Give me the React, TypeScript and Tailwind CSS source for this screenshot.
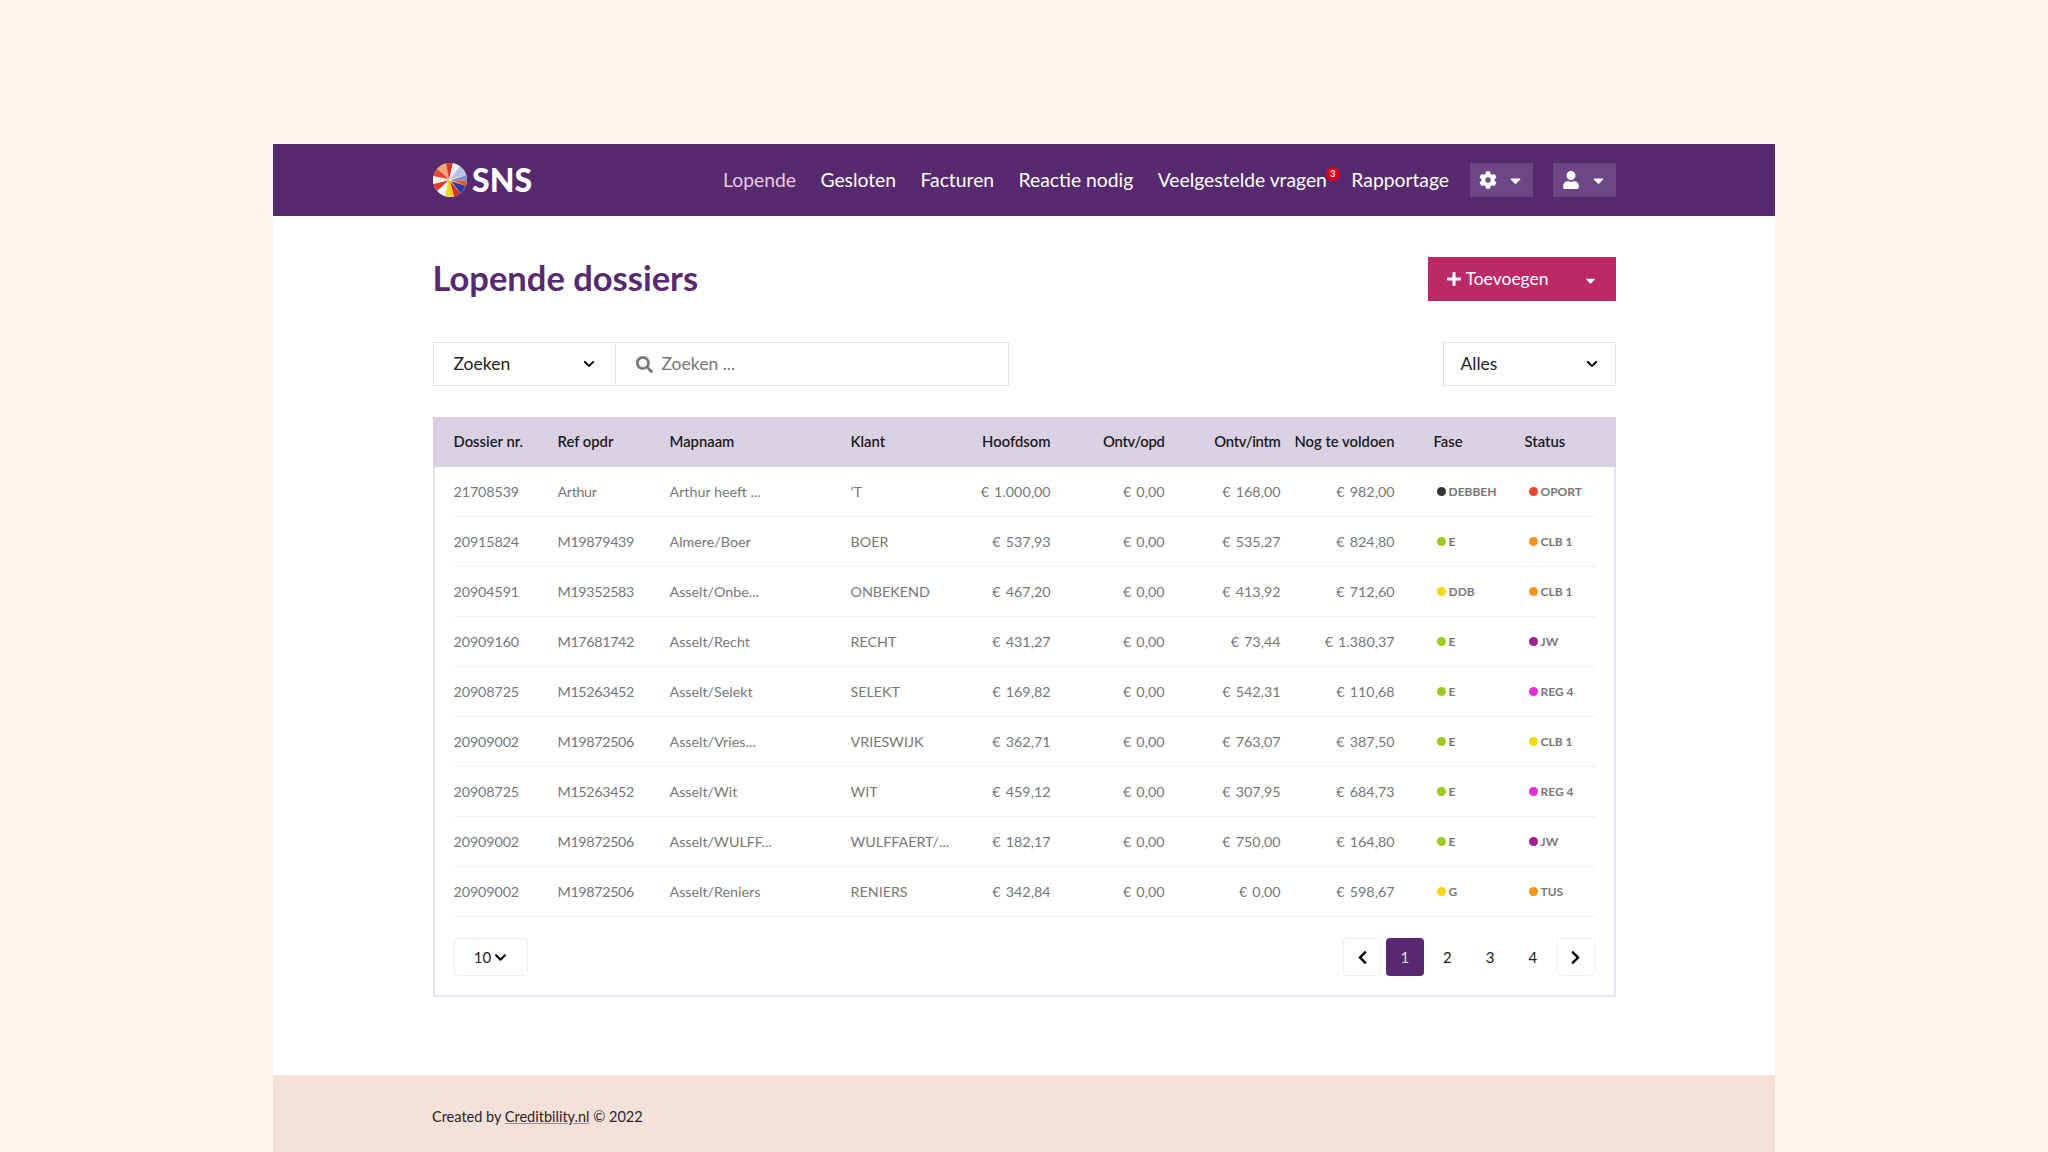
import React from 'react';
import { FaCaretDown, FaChevronDown, FaChevronLeft, FaChevronRight, FaCog, FaPlus, FaSearch, FaUser } from 'react-icons/fa';

type Row = {
    nr: string;
    ref: string;
    map: string;
    klant: string;
    hoofd: string;
    opd: string;
    intm: string;
    nog: string;
    fase: string;
    faseDot: string;
    status: string;
    statusDot: string;
};

const DARK = 'bg-[#333333]';
const GREEN = 'bg-[#9ccc1c]';
const YELLOW = 'bg-[#f6d80e]';
const ORANGE = 'bg-[#f7931a]';
const RED = 'bg-[#e8452f]';
const PURPLE = 'bg-[#a01f95]';
const PINK = 'bg-[#e62fd8]';

const rows: Row[] = [
    { nr: '21708539', ref: 'Arthur', map: 'Arthur heeft ...', klant: '‘T', hoofd: '€ 1.000,00', opd: '€ 0,00', intm: '€ 168,00', nog: '€ 982,00', fase: 'DEBBEH', faseDot: DARK, status: 'OPORT', statusDot: RED },
    { nr: '20915824', ref: 'M19879439', map: 'Almere/Boer', klant: 'BOER', hoofd: '€ 537,93', opd: '€ 0,00', intm: '€ 535,27', nog: '€ 824,80', fase: 'E', faseDot: GREEN, status: 'CLB 1', statusDot: ORANGE },
    { nr: '20904591', ref: 'M19352583', map: 'Asselt/Onbe...', klant: 'ONBEKEND', hoofd: '€ 467,20', opd: '€ 0,00', intm: '€ 413,92', nog: '€ 712,60', fase: 'DDB', faseDot: YELLOW, status: 'CLB 1', statusDot: ORANGE },
    { nr: '20909160', ref: 'M17681742', map: 'Asselt/Recht', klant: 'RECHT', hoofd: '€ 431,27', opd: '€ 0,00', intm: '€ 73,44', nog: '€ 1.380,37', fase: 'E', faseDot: GREEN, status: 'JW', statusDot: PURPLE },
    { nr: '20908725', ref: 'M15263452', map: 'Asselt/Selekt', klant: 'SELEKT', hoofd: '€ 169,82', opd: '€ 0,00', intm: '€ 542,31', nog: '€ 110,68', fase: 'E', faseDot: GREEN, status: 'REG 4', statusDot: PINK },
    { nr: '20909002', ref: 'M19872506', map: 'Asselt/Vries...', klant: 'VRIESWIJK', hoofd: '€ 362,71', opd: '€ 0,00', intm: '€ 763,07', nog: '€ 387,50', fase: 'E', faseDot: GREEN, status: 'CLB 1', statusDot: YELLOW },
    { nr: '20908725', ref: 'M15263452', map: 'Asselt/Wit', klant: 'WIT', hoofd: '€ 459,12', opd: '€ 0,00', intm: '€ 307,95', nog: '€ 684,73', fase: 'E', faseDot: GREEN, status: 'REG 4', statusDot: PINK },
    { nr: '20909002', ref: 'M19872506', map: 'Asselt/WULFF...', klant: 'WULFFAERT/...', hoofd: '€ 182,17', opd: '€ 0,00', intm: '€ 750,00', nog: '€ 164,80', fase: 'E', faseDot: GREEN, status: 'JW', statusDot: PURPLE },
    { nr: '20909002', ref: 'M19872506', map: 'Asselt/Reniers', klant: 'RENIERS', hoofd: '€ 342,84', opd: '€ 0,00', intm: '€ 0,00', nog: '€ 598,67', fase: 'G', faseDot: YELLOW, status: 'TUS', statusDot: ORANGE },
];

const GRID = 'grid grid-cols-[105px_111px_181px_120px_80px_114px_116px_114px_130px_71px] items-center';
const MONEY = 'text-right [word-spacing:1.5px]';

const Logo = () => (
    <svg width="34" height="34" viewBox="0 0 34 34" className="shrink-0 ml-[1px]">
        <defs>
            <clipPath id="logoClip">
                <circle cx="17" cy="17" r="17" />
            </clipPath>
        </defs>
        <g clipPath="url(#logoClip)">
            <rect width="34" height="34" fill="#f6f1ee" />
            <polygon points="16,16 3,5 13,0" fill="#f3a678" />
            <polygon points="16,16 13,0 20,0" fill="#d8342b" />
            <polygon points="17,15 20,0 27,3" fill="#f3eef2" />
            <polygon points="17,16 27,3 34,12" fill="#b9c3e6" />
            <polygon points="18,17 34,12 34,18" fill="#7f8fcb" />
            <polygon points="18,17 34,18 33,23" fill="#e8552a" />
            <polygon points="18,18 33,23 28,31" fill="#2d3f96" />
            <polygon points="17,18 28,31 21,34" fill="#d92b2b" />
            <polygon points="16,15 21,34 12,33" fill="#f7d21e" />
            <polygon points="15,18 12,33 4,28" fill="#f8f4ee" />
            <polygon points="16,17 4,28 0,21" fill="#de3a2e" />
            <polygon points="16,17 0,21 0,13" fill="#f7efe8" />
            <polygon points="16,16 0,13 3,5" fill="#e8432f" />
        </g>
    </svg>
);

const Dot = ({ color, label }: { color: string; label: string }) => (
    <div className="flex items-center gap-[3px] text-[12px] font-bold text-[#777777]">
        <span className={`w-[9px] h-[9px] rounded-full ${color}`}></span>
        <span>{label}</span>
    </div>
);

const App: React.FC = () => {
    return (
        <div className="min-h-screen bg-[#fff3ee] pt-[144px] font-['Lato','Liberation_Sans',sans-serif]">
            <div className="w-[1502px] h-[1008px] mx-auto flex flex-col bg-white">
                {/* Navbar */}
                <header className="h-[72px] shrink-0 bg-[#572a70] px-[159px] flex items-center">
                    <div className="flex items-center gap-[5px]">
                        <Logo />
                        <span className="text-[32px] leading-none font-black text-white">SNS</span>
                    </div>
                    <nav className="ml-auto flex items-center gap-[24.5px] text-[19.3px] text-white">
                        <span className="text-[#ecc9e2]">Lopende</span>
                        <span>Gesloten</span>
                        <span>Facturen</span>
                        <span>Reactie nodig</span>
                        <span className="relative">
                            Veelgestelde vragen
                            <span className="absolute -right-[13px] top-[1px] w-[14px] h-[14px] rounded-full bg-[#e3001b] text-white text-[9px] font-bold flex items-center justify-center">3</span>
                        </span>
                        <span>Rapportage</span>
                    </nav>
                    <button className="ml-[21px] w-[63px] h-[34px] bg-[#6d4785] text-white flex items-center justify-center gap-[10px]">
                        <FaCog className="text-[18px]" />
                        <FaCaretDown className="text-[17px]" />
                    </button>
                    <button className="ml-[20px] w-[63px] h-[34px] bg-[#6d4785] text-white flex items-center justify-center gap-[10px]">
                        <FaUser className="text-[18px]" />
                        <FaCaretDown className="text-[17px]" />
                    </button>
                </header>

                {/* Content */}
                <main className="flex-1 w-[1183px] mx-auto pt-[41px]">
                    <div className="flex items-center justify-between">
                        <h1 className="text-[34.5px] leading-none font-bold text-[#572a70] pb-[2px]">Lopende dossiers</h1>
                        <button className="w-[188px] h-[44px] bg-[#bb2a66] text-white text-[17.5px] flex items-center pl-[18px] pr-[18px]">
                            <FaPlus className="text-[16px] mr-[4px]" />
                            <span>Toevoegen</span>
                            <FaCaretDown className="ml-auto mt-[3px] text-[15px]" />
                        </button>
                    </div>

                    <div className="mt-[41px] flex items-center justify-between text-[17.5px]">
                        <div className="flex h-[44px] border border-[#e3e3e3]">
                            <div className="w-[182px] px-[20px] flex items-center justify-between border-r border-[#e3e3e3] text-[#222222]">
                                <span>Zoeken</span>
                                <FaChevronDown className="text-[12px] text-black" />
                            </div>
                            <div className="w-[392px] pl-[20px] flex items-center gap-[9px] text-[#777777]">
                                <FaSearch className="text-[17px]" />
                                <span>Zoeken ...</span>
                            </div>
                        </div>
                        <div className="w-[173px] h-[44px] border border-[#e3e3e3] px-[17px] flex items-center justify-between text-[#222222]">
                            <span>Alles</span>
                            <FaChevronDown className="text-[12px] text-black" />
                        </div>
                    </div>

                    {/* Table */}
                    <div className="mt-[31px] h-[580px] border-2 border-t-0 border-[#e4e3ee] flex flex-col">
                        <div className={`${GRID} h-[50px] -mx-[2px] pl-[21px] pb-[2px] bg-[#d9d0e4] text-[14.8px] font-semibold text-[#1c1c1c]`}>
                            <div>Dossier nr.</div>
                            <div className="-ml-[1px]">Ref opdr</div>
                            <div>Mapnaam</div>
                            <div>Klant</div>
                            <div className="text-right">Hoofdsom</div>
                            <div className="text-right tracking-[-0.3px]">Ontv/opd</div>
                            <div className="text-right tracking-[-0.3px]">Ontv/intm</div>
                            <div className="text-right">Nog te voldoen</div>
                            <div className="pl-[39px]">Fase</div>
                            <div>Status</div>
                        </div>
                        <div className="mx-[19px] text-[14.3px] text-[#777777]">
                            {rows.map((row, idx) => (
                                <div key={idx} className={`${GRID} h-[50px] border-b border-dotted border-[#e6e6e6]`}>
                                    <div className="tracking-[-0.1px]">{row.nr}</div>
                                    <div className="-ml-[1px] tracking-[-0.35px]">{row.ref}</div>
                                    <div>{row.map}</div>
                                    <div>{row.klant}</div>
                                    <div className={MONEY}>{row.hoofd}</div>
                                    <div className={MONEY}>{row.opd}</div>
                                    <div className={MONEY}>{row.intm}</div>
                                    <div className={MONEY}>{row.nog}</div>
                                    <div className="pl-[42px]"><Dot color={row.faseDot} label={row.fase} /></div>
                                    <div className="pl-[4px]"><Dot color={row.statusDot} label={row.status} /></div>
                                </div>
                            ))}
                        </div>
                        <div className="mx-[19px] mt-[21px] flex items-center justify-between text-[15px] text-[#1c1c1c]">
                            <div className="w-[74px] h-[38px] border border-[#ececec] rounded flex items-center justify-center gap-[3px]">
                                <span>10</span>
                                <FaChevronDown className="text-[13px] text-black" />
                            </div>
                            <div className="flex items-center gap-[4.7px]">
                                <button className="w-[38px] h-[38px] border border-[#ececec] rounded flex items-center justify-center text-black">
                                    <FaChevronLeft className="text-[15px]" />
                                </button>
                                <span className="w-[38px] h-[38px] rounded bg-[#572a70] text-[#eadcf0] flex items-center justify-center">1</span>
                                <span className="w-[38px] h-[38px] flex items-center justify-center">2</span>
                                <span className="w-[38px] h-[38px] flex items-center justify-center">3</span>
                                <span className="w-[38px] h-[38px] flex items-center justify-center">4</span>
                                <button className="w-[38px] h-[38px] border border-[#ececec] rounded flex items-center justify-center text-black">
                                    <FaChevronRight className="text-[15px]" />
                                </button>
                            </div>
                        </div>
                    </div>
                </main>

                {/* Footer */}
                <footer className="h-[77px] shrink-0 bg-[#f5e0da] px-[159px] pt-[6px] flex items-center text-[14.5px] text-[#2a1f24]">
                    <span>
                        Created by <span className="underline decoration-[#9a8f94]">Creditbility.nl</span> © 2022
                    </span>
                </footer>
            </div>
        </div>
    );
};

export default App;
